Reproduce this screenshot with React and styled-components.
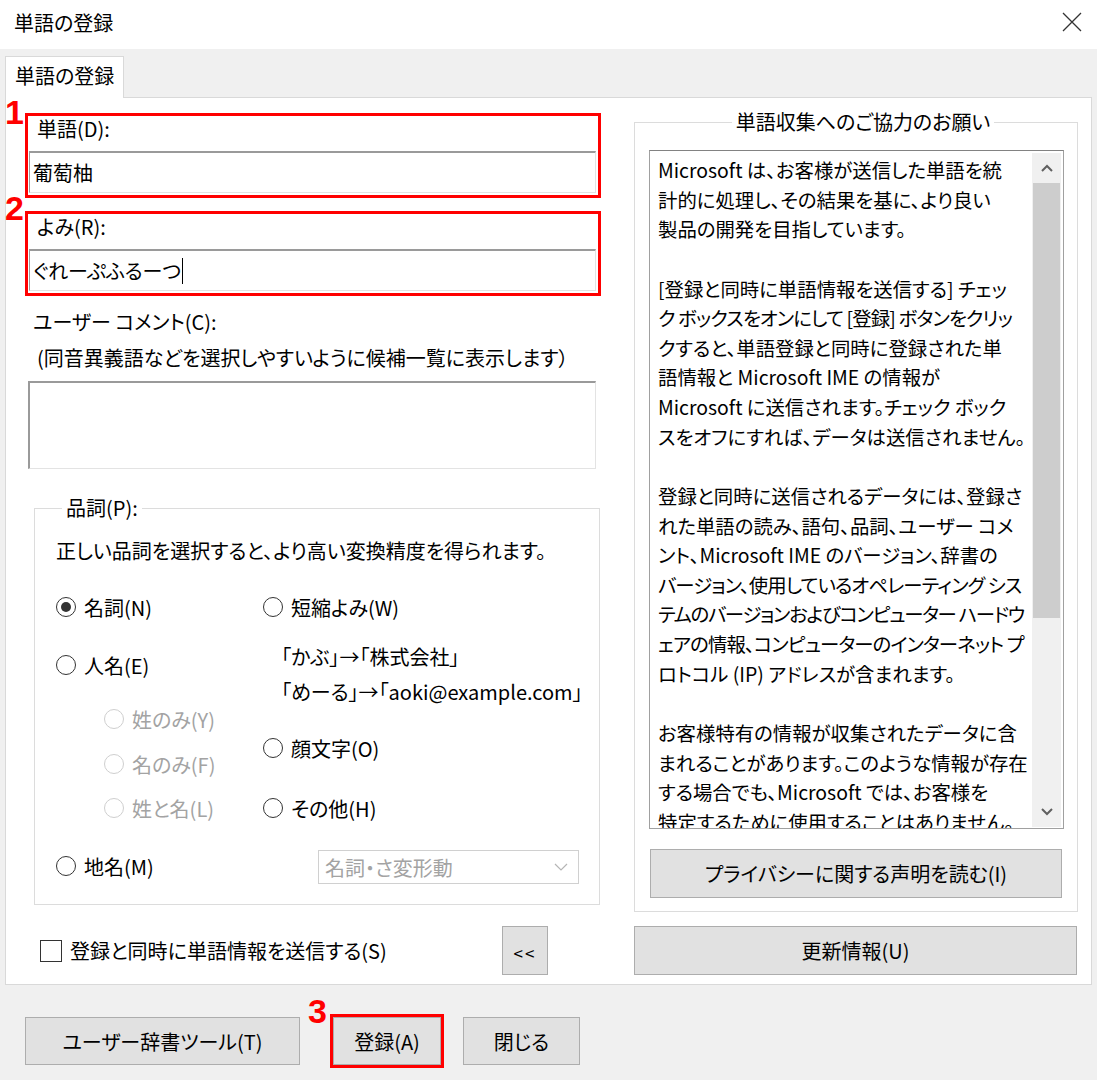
import React from 'react';
import styled, { createGlobalStyle } from 'styled-components';

/*
    Word registration dialog (IME user dictionary)
*/

const GlobalStyle = createGlobalStyle`
    html, body {
        margin: 0;
        padding: 0;
        background: #fff;
    }
    body {
        font-family: "Noto Sans CJK JP", "Noto Sans", sans-serif;
        font-feature-settings: "palt";
        color: #000;
    }
    * {
        box-sizing: border-box;
    }
`;

const Window = styled.div`
    width: 1097px;
    height: 1080px;
    display: flex;
    flex-direction: column;
    overflow: hidden;
`;

const TitleBar = styled.div`
    height: 49px;
    flex: none;
    display: flex;
    align-items: center;
    justify-content: space-between;
    padding: 0 15px 5px 14px;
    font-size: 20px;
    background: #fff;
`;

const Body = styled.div`
    flex: 1;
    background: #f0f0f0;
    padding: 7px 5px 0 5px;
    display: flex;
    flex-direction: column;
`;

const TabStrip = styled.div`
    height: 41px;
    display: flex;
`;

const Tab = styled.div`
    width: 119px;
    height: 42px;
    background: #fff;
    border: 1px solid #d9d9d9;
    border-bottom: none;
    font-size: 20px;
    line-height: 38px;
    padding-left: 9px;
    position: relative;
    z-index: 1;
`;

const TabPanel = styled.div`
    height: 888px;
    background: #fff;
    border: 1px solid #d9d9d9;
    display: flex;
`;

const LeftCol = styled.div`
    width: 628px;
    padding: 15px 0 0 19px;
    display: flex;
    flex-direction: column;
`;

const RightCol = styled.div`
    width: 444px;
    padding-top: 9px;
    display: flex;
    flex-direction: column;
`;

const Marked = styled.div`
    position: relative;
    border: 3px solid #ff0000;
    margin-top: ${p => p.$mt || 0}px;
    margin-left: ${p => p.$ml || 0}px;
    width: ${p => p.$w || 'auto'};
    flex: none;
`;

const Num = styled.span`
    position: absolute;
    left: ${p => p.$left}px;
    top: ${p => p.$top}px;
    font-family: "Liberation Sans", Arial, sans-serif;
    font-weight: bold;
    font-size: 34px;
    line-height: 1;
    color: #ff0000;
`;

const FieldLabel = styled.div`
    height: 35px;
    line-height: 26px;
    font-size: 20px;
    padding-left: 9px;
`;

const TextField = styled.div`
    height: 42px;
    margin: 0 2px 2px 1px;
    border: 1px solid #e3e3e3;
    border-top: 2px solid #9a9a9a;
    border-left: 1px solid #9a9a9a;
    display: flex;
    align-items: center;
    padding-left: 3px;
    font-size: 20px;
`;

const Caret = styled.span`
    display: inline-block;
    width: 1px;
    height: 26px;
    background: #000;
    margin-left: 1px;
`;

const Label = styled.div`
    font-size: 20px;
    line-height: 30px;
    margin-top: ${p => p.$mt || 0}px;
    padding-left: ${p => p.$pl || 0}px;
    color: ${p => (p.$disabled ? '#a3a3a3' : '#000')};
    white-space: nowrap;
`;

const CommentBox = styled.div`
    width: 568px;
    height: 88px;
    margin: 8px 0 0 3px;
    border: 1px solid #e3e3e3;
    border-top: 2px solid #9a9a9a;
    border-left: 2px solid #9a9a9a;
`;

const Group = styled.fieldset`
    margin: ${p => p.$m || 0};
    padding: ${p => p.$p || 0};
    width: ${p => p.$w}px;
    border: 1px solid #dcdcdc;
    min-inline-size: 0;
`;

const Legend = styled.legend`
    font-size: 20px;
    line-height: 30px;
    padding: 0 4px;
    margin-left: ${p => (p.$center ? 'auto' : '6px')};
    margin-right: ${p => (p.$center ? 'auto' : '0')};
    color: #000;
`;

const RadioArea = styled.div`
    display: flex;
    margin-top: 26px;
`;

const RadioCol = styled.div`
    width: ${p => p.$w || 'auto'};
    display: flex;
    flex-direction: column;
`;

const RadioRow = styled.div`
    display: flex;
    align-items: center;
    height: 30px;
    gap: 8px;
    margin-top: ${p => p.$mt || 0}px;
    margin-left: ${p => p.$ml || 0}px;
    font-size: 20px;
    white-space: nowrap;
    color: ${p => (p.$disabled ? '#a3a3a3' : '#000')};
`;

const Circle = styled.span`
    width: 20px;
    height: 20px;
    flex: none;
    border-radius: 50%;
    border: 1.5px solid ${p => (p.$disabled ? '#cfcfcf' : '#333')};
    display: flex;
    align-items: center;
    justify-content: center;
    &::after {
        content: '';
        display: ${p => (p.$checked ? 'block' : 'none')};
        width: 10px;
        height: 10px;
        border-radius: 50%;
        background: #333;
    }
`;

const Select = styled.div`
    width: 261px;
    height: 34px;
    margin: 27px 0 0 55px;
    border: 1px solid #d0d0d0;
    display: flex;
    align-items: center;
    justify-content: space-between;
    padding: 0 10px 0 6px;
    font-size: 20px;
    color: #a3a3a3;
`;

const CheckRow = styled.div`
    width: 523px;
    height: 49px;
    margin-top: 21px;
    display: flex;
    align-items: center;
    font-size: 20px;
`;

const CheckBox = styled.span`
    width: 22px;
    height: 22px;
    margin: 0 8px 0 15px;
    border: 1px solid #333;
    flex: none;
`;

const Button = styled.div`
    width: ${p => p.$w}px;
    height: ${p => p.$h || 49}px;
    margin: ${p => p.$m || 0};
    flex: none;
    background: #e1e1e1;
    border: 1px solid #adadad;
    display: flex;
    align-items: center;
    justify-content: center;
    font-size: ${p => p.$fs || 20}px;
    letter-spacing: ${p => p.$ls || 0}px;
    padding-top: ${p => p.$pt || 0}px;
    white-space: nowrap;
`;

const InfoBox = styled.div`
    width: 415px;
    height: 679px;
    border: 1px solid #a0a0a0;
    border-top-color: #828282;
    display: flex;
`;

const InfoText = styled.div`
    flex: 1;
    overflow: hidden;
    padding: 4px 0 0 8px;
    font-size: 19.4px;
    line-height: 29.64px;
`;

const InfoLine = styled.div`
    height: 29.64px;
    white-space: nowrap;
    letter-spacing: ${p => p.$ls || 0}px;
`;

const ScrollBar = styled.div`
    width: 29px;
    margin: 2px 2px 1px 0;
    background: #f0f0f0;
    display: flex;
    flex-direction: column;
`;

const ScrollArrow = styled.div`
    height: 30px;
    flex: none;
    display: flex;
    align-items: center;
    justify-content: center;
`;

const Thumb = styled.div`
    height: 435px;
    margin: 0 1px;
    background: #cdcdcd;
    flex: none;
`;

const Track = styled.div`
    flex: 1;
`;

const Footer = styled.div`
    display: flex;
    align-items: center;
    padding: 29px 0 0 20px;
`;

const Chevron = ({ up }) => (
    <svg width="12" height="8" viewBox="0 0 12 8">
        <polyline
            points={up ? '1,7 6,2 11,7' : '1,1 6,6 11,1'}
            fill="none"
            stroke="#606060"
            strokeWidth="2"
        />
    </svg>
);

// katakana-heavy lines are set a little tighter so they fit the box
const infoLines = [
    ['Microsoft は、お客様が送信した単語を統'],
    ['計的に処理し、その結果を基に、より良い'],
    ['製品の開発を目指しています。'],
    [''],
    ['[登録と同時に単語情報を送信する] チェッ'],
    ['ク ボックスをオンにして [登録] ボタンをクリッ', -0.85],
    ['クすると、単語登録と同時に登録された単'],
    ['語情報と Microsoft IME の情報が'],
    ['Microsoft に送信されます。チェック ボック'],
    ['スをオフにすれば、データは送信されません。'],
    [''],
    ['登録と同時に送信されるデータには、登録さ'],
    ['れた単語の読み、語句、品詞、ユーザー コメ'],
    ['ント、Microsoft IME のバージョン、辞書の'],
    ['バージョン、使用しているオペレーティング シス', -0.9],
    ['テムのバージョンおよびコンピューター ハードウ', -1.3],
    ['ェアの情報、コンピューターのインターネット プ', -0.9],
    ['ロトコル (IP) アドレスが含まれます。'],
    [''],
    ['お客様特有の情報が収集されたデータに含'],
    ['まれることがあります。このような情報が存在'],
    ['する場合でも、Microsoft では、お客様を'],
    ['特定するために使用することはありません。'],
];

export default function App() {
    return (
        <Window>
            <GlobalStyle />
            <TitleBar>
                <span>単語の登録</span>
                <svg width="20" height="20" viewBox="0 0 20 20">
                    <path d="M1 1 L19 19 M19 1 L1 19" stroke="#333" strokeWidth="1.3" />
                </svg>
            </TitleBar>
            <Body>
                <TabStrip>
                    <Tab>単語の登録</Tab>
                </TabStrip>
                <TabPanel>
                    <LeftCol>
                        <Marked $w="576px">
                            <Num $left={-23} $top={-21}>1</Num>
                            <FieldLabel>単語(D):</FieldLabel>
                            <TextField>葡萄柚</TextField>
                        </Marked>
                        <Marked $mt={13} $w="576px">
                            <Num $left={-23} $top={-23}>2</Num>
                            <FieldLabel>よみ(R):</FieldLabel>
                            <TextField>
                                ぐれーぷふるーつ<Caret />
                            </TextField>
                        </Marked>
                        <Label $mt={11} $pl={8}>ユーザー コメント(C):</Label>
                        <Label $mt={6} $pl={12}>(同音異義語などを選択しやすいように候補一覧に表示します）</Label>
                        <CommentBox />
                        <Group $w={566} $m="24px 0 0 9px" $p="13px 0 20px 21px">
                            <Legend>品詞(P):</Legend>
                            <Label>正しい品詞を選択すると、より高い変換精度を得られます。</Label>
                            <RadioArea>
                                <RadioCol $w="207px">
                                    <RadioRow>
                                        <Circle $checked />名詞(N)
                                    </RadioRow>
                                    <RadioRow $mt={28}>
                                        <Circle />人名(E)
                                    </RadioRow>
                                    <RadioRow $mt={24} $ml={48} $disabled>
                                        <Circle $disabled />姓のみ(Y)
                                    </RadioRow>
                                    <RadioRow $mt={15} $ml={48} $disabled>
                                        <Circle $disabled />名のみ(F)
                                    </RadioRow>
                                    <RadioRow $mt={14} $ml={48} $disabled>
                                        <Circle $disabled />姓と名(L)
                                    </RadioRow>
                                    <RadioRow $mt={28}>
                                        <Circle />地名(M)
                                    </RadioRow>
                                </RadioCol>
                                <RadioCol>
                                    <RadioRow>
                                        <Circle />短縮よみ(W)
                                    </RadioRow>
                                    <Label $mt={20} $pl={18}>「かぶ」→「株式会社」</Label>
                                    <Label $mt={5} $pl={18}>「めーる」→「aoki@example.com」</Label>
                                    <RadioRow $mt={26}>
                                        <Circle />顔文字(O)
                                    </RadioRow>
                                    <RadioRow $mt={30}>
                                        <Circle />その他(H)
                                    </RadioRow>
                                    <Select>
                                        <span>名詞・さ変形動</span>
                                        <svg width="14" height="8" viewBox="0 0 14 8">
                                            <polyline points="1,1 7,7 13,1" fill="none" stroke="#b5b5b5" strokeWidth="1.2" />
                                        </svg>
                                    </Select>
                                </RadioCol>
                            </RadioArea>
                        </Group>
                        <CheckRow>
                            <CheckBox />
                            登録と同時に単語情報を送信する(S)
                            <Button $w={46} $m="0 0 0 auto" $fs={17} $ls={2} $pt={4}>&lt;&lt;</Button>
                        </CheckRow>
                    </LeftCol>
                    <RightCol>
                        <Group $w={444} $p="13px 0 13px 14px">
                            <Legend $center>単語収集へのご協力のお願い</Legend>
                            <InfoBox>
                                <InfoText>
                                    {infoLines.map(([line, ls], i) => (
                                        <InfoLine key={i} $ls={ls}>{line}</InfoLine>
                                    ))}
                                </InfoText>
                                <ScrollBar>
                                    <ScrollArrow>
                                        <Chevron up />
                                    </ScrollArrow>
                                    <Thumb />
                                    <Track />
                                    <ScrollArrow>
                                        <Chevron />
                                    </ScrollArrow>
                                </ScrollBar>
                            </InfoBox>
                            <Button $w={412} $m="20px 0 0 1px">プライバシーに関する声明を読む(I)</Button>
                        </Group>
                        <Button $w={443} $m="14px 0 0 0">更新情報(U)</Button>
                    </RightCol>
                </TabPanel>
                <Footer>
                    <Button $w={275} $h={48}>ユーザー辞書ツール(T)</Button>
                    <Marked $ml={30}>
                        <Num $left={-25} $top={-23}>3</Num>
                        <Button $w={108} $h={48}>登録(A)</Button>
                    </Marked>
                    <Button $w={117} $h={48} $m="0 0 0 19px">閉じる</Button>
                </Footer>
            </Body>
        </Window>
    );
}
